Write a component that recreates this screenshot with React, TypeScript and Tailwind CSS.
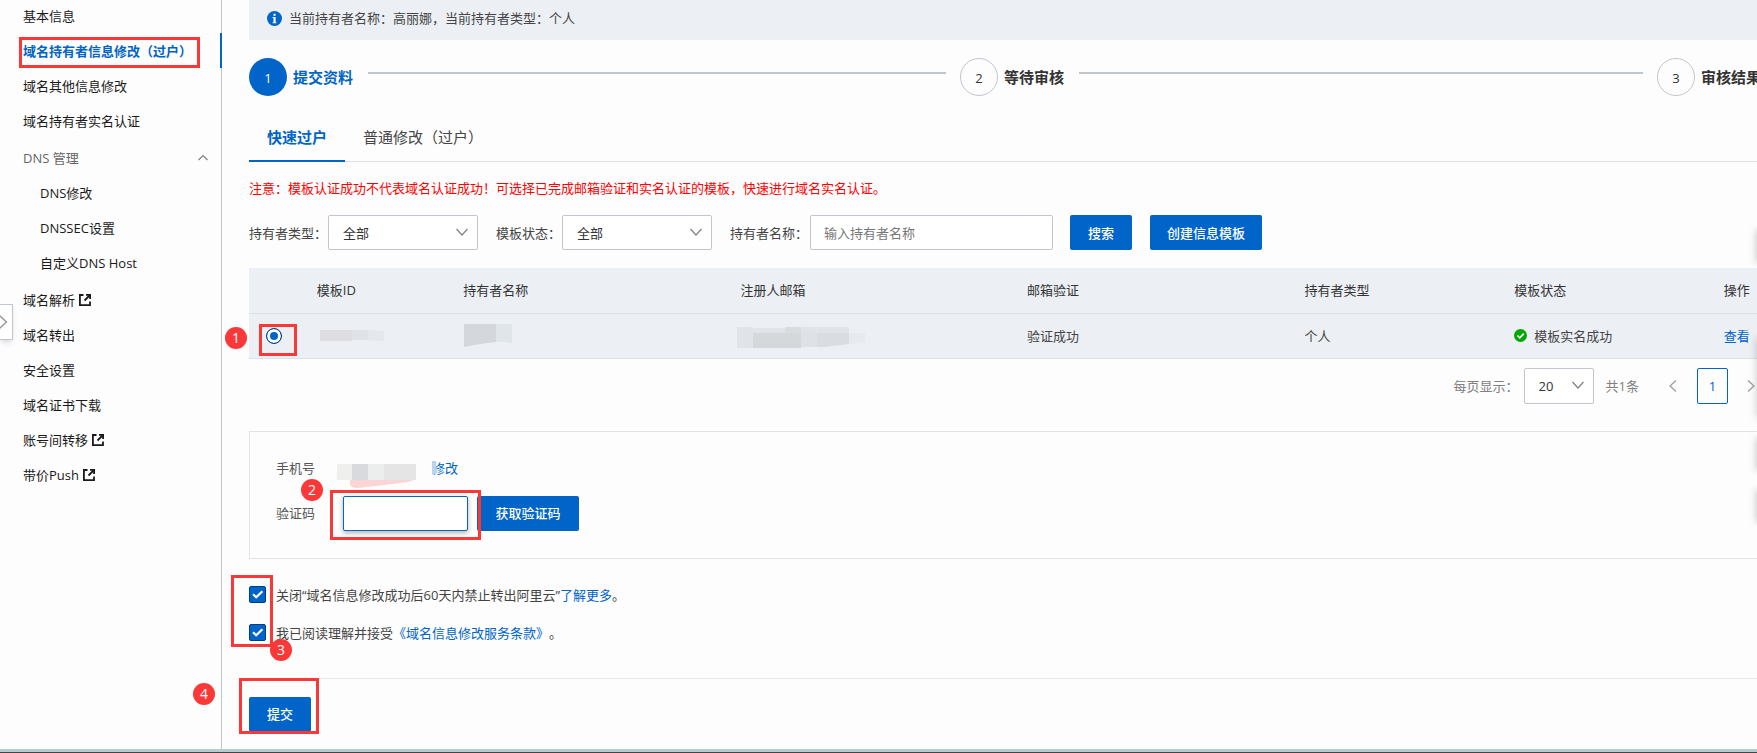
import type { ReactNode } from "react";

type NavItem = { label: string; active?: boolean; external?: boolean; nested?: boolean };

const topNav: NavItem[] = [
  { label: "基本信息" },
  { label: "域名持有者信息修改（过户）", active: true },
  { label: "域名其他信息修改" },
  { label: "域名持有者实名认证" },
];

const dnsNav: NavItem[] = [
  { label: "DNS修改", nested: true },
  { label: "DNSSEC设置", nested: true },
  { label: "自定义DNS Host", nested: true },
];

const bottomNav: NavItem[] = [
  { label: "域名解析", external: true },
  { label: "域名转出" },
  { label: "安全设置" },
  { label: "域名证书下载" },
  { label: "账号间转移", external: true },
  { label: "带价Push", external: true },
];

const DOWN = "M0.5 3 L6 9 L11.5 3";
const UP = "M1.5 8 L6 3.5 L10.5 8";
const LEFT = "M9 0.5 L3 6 L9 11.5";
const RIGHT = "M3 0.5 L9 6 L3 11.5";

function Chevron({ className, d }: { className: string; d: string }) {
  return (
    <svg className={className} viewBox="0 0 12 12" fill="none" stroke="currentColor" strokeWidth="1.2" aria-hidden="true">
      <path d={d} />
    </svg>
  );
}

function ExternalIcon() {
  return (
    <svg className="size-3 shrink-0" viewBox="0 0 12 12" fill="none" stroke="#1a1a1a" strokeWidth="1.8" aria-hidden="true">
      <path d="M4.5 1 H0.9 V11.1 H11 V7.5" />
      <path d="M7 0.9 H11.1 V5" />
      <path d="M11 1 L5.5 6.5" />
    </svg>
  );
}

function Marker({ className, children }: { className: string; children: ReactNode }) {
  return (
    <span
      className={`absolute z-20 flex size-[22px] items-center justify-center rounded-full bg-[#fb3838] text-sm leading-5 text-white ${className}`}
    >
      {children}
    </span>
  );
}

function Frame({ className }: { className: string }) {
  return <span aria-hidden="true" className={`pointer-events-none absolute z-10 border-3 border-[#fb3838] ${className}`} />;
}

function NavLink({ item }: { item: NavItem }) {
  return (
    <li className="relative">
      <a
        href="#"
        className={`flex h-[35px] items-center gap-1 whitespace-nowrap ${item.nested ? "pl-10" : "pl-[23px]"} ${
          item.active ? "font-bold text-[#0064c8]" : "text-[#1a1a1a]"
        }`}
      >
        {item.label}
        {item.external && <ExternalIcon />}
      </a>
      {item.active && (
        <>
          <span className="absolute top-0 -right-px h-full w-0.5 bg-[#0064c8]" />
          <Frame className="top-1 left-[19px] h-[31px] w-[181px]" />
        </>
      )}
    </li>
  );
}

function Sidebar() {
  return (
    <nav aria-label="域名" className="relative w-[222px] shrink-0 border-r border-[#c0c6cc]">
      <ul className="-mt-0.5">
        {topNav.map((item) => (
          <NavLink key={item.label} item={item} />
        ))}
      </ul>
      <button
        type="button"
        aria-expanded="true"
        className="mt-0.5 flex h-[35px] w-full items-center justify-between pr-3 pl-[23px] text-[#666]"
      >
        DNS 管理
        <Chevron className="size-3 text-[#808080]" d={UP} />
      </button>
      <ul className="mb-0.5">
        {dnsNav.map((item) => (
          <NavLink key={item.label} item={item} />
        ))}
      </ul>
      <ul>
        {bottomNav.map((item) => (
          <NavLink key={item.label} item={item} />
        ))}
      </ul>
      <button
        type="button"
        aria-label="展开"
        className="absolute top-[304px] left-0 flex h-9 w-[13px] items-center border border-l-0 border-[#c0c6cc] bg-white shadow-md"
      >
        <Chevron className="-ml-1 size-3.5 shrink-0 text-[#999]" d={RIGHT} />
      </button>
    </nav>
  );
}

function Step({ n, label, active }: { n: number; label: string; active?: boolean }) {
  return (
    <>
      <span
        className={`flex size-[38px] shrink-0 items-center justify-center rounded-full pt-0.5 ${
          active ? "bg-[#0064c8] text-white" : "border border-[#c0c6cc] text-[#333]"
        }`}
      >
        {n}
      </span>
      <span className={`ml-1.5 text-[15px] font-bold whitespace-nowrap ${active ? "text-[#0064c8]" : "text-[#333]"}`}>
        {label}
      </span>
    </>
  );
}

function StepLine() {
  return <span className="mr-[14px] mb-2 ml-[15px] h-0.5 flex-1 bg-[#c0c6cc]" />;
}

function Select({ id, value, className }: { id: string; value: string; className: string }) {
  return (
    <span className={`relative inline-flex shrink-0 ${className}`}>
      <select
        id={id}
        defaultValue={value}
        className="size-full appearance-none rounded-xs border border-[#c0c6cc] bg-white pl-[14px] text-[#333]"
      >
        <option>{value}</option>
      </select>
      <Chevron className="pointer-events-none absolute top-[11px] right-[10px] size-3 text-[#808080]" d={DOWN} />
    </span>
  );
}

function PrimaryButton({ children, className }: { children: ReactNode; className: string }) {
  return (
    <button
      type="button"
      className={`h-[35px] shrink-0 rounded-xs bg-[#0064c8] font-medium whitespace-nowrap text-white ${className}`}
    >
      {children}
    </button>
  );
}

function Agreement({ id, children }: { id: string; children: ReactNode }) {
  return (
    <div className="flex h-[38px] items-center gap-[10px]">
      <span className="relative flex">
        <input
          id={id}
          type="checkbox"
          defaultChecked
          className="size-[17px] appearance-none rounded-xs border border-[#003f7f] bg-[#0064c8]"
        />
        <svg
          className="pointer-events-none absolute inset-0 size-[17px]"
          viewBox="0 0 17 17"
          fill="none"
          stroke="#fff"
          strokeWidth="2.2"
          aria-hidden="true"
        >
          <path d="M4 8.2 L7.2 11.2 L13.4 5.2" />
        </svg>
      </span>
      <label htmlFor={id}>{children}</label>
    </div>
  );
}

function TemplateTable() {
  return (
    <table className="w-full table-fixed border-collapse text-left whitespace-nowrap">
      <colgroup>
        <col className="w-[4.5%]" />
        <col className="w-[9.7%]" />
        <col className="w-[18.4%]" />
        <col className="w-[19%]" />
        <col className="w-[18.4%]" />
        <col className="w-[13.9%]" />
        <col className="w-[13.9%]" />
        <col />
      </colgroup>
      <thead>
        <tr className="h-[45px] border-b border-[#dee1e4] bg-[#ecf0f5] text-[#333]">
          <th aria-label="选择" />
          <th className="font-normal">模板ID</th>
          <th className="font-normal">持有者名称</th>
          <th className="font-normal">注册人邮箱</th>
          <th className="font-normal">邮箱验证</th>
          <th className="font-normal">持有者类型</th>
          <th className="font-normal">模板状态</th>
          <th className="font-normal">操作</th>
        </tr>
      </thead>
      <tbody>
        <tr className="h-[45px] border-b border-[#dee1e4] bg-[#ecf0f5] text-[#444]">
          <td className="relative">
            <input
              type="radio"
              name="template"
              defaultChecked
              aria-label="选择模板"
              className="ml-[17px] block size-4 appearance-none rounded-full border border-[#003f7f] bg-[#0064c8] ring-[3px] ring-white ring-inset"
            />
            <Frame className="top-[10px] left-[10px] h-8 w-[38px]" />
            <Marker className="top-[13px] -left-6">1</Marker>
          </td>
          <td>
            <svg className="ml-[3px] block h-[11px] w-16" viewBox="0 0 64 11" aria-hidden="true">
              <path d="M0 0H32V11H0Z" fill="#dcdee2" />
              <path d="M32 0H48V10H32Z" fill="#dfe2e6" />
              <path d="M48 0L64 1V11H58L48 10Z" fill="#e4e8ec" />
            </svg>
          </td>
          <td>
            <svg className="ml-px block h-[23px] w-12" viewBox="0 0 48 23" aria-hidden="true">
              <path d="M0 0H32V18L16 20L5 22L0 23Z" fill="#d4d7db" />
              <path d="M32 0H48V19L40 18H32Z" fill="#e0e5e9" />
            </svg>
          </td>
          <td>
            <svg className="-ml-1 block h-[25px] w-32" viewBox="0 -4 128 25" aria-hidden="true">
              <path d="M0 0H16V21H0Z" fill="#e0e3e7" />
              <path d="M16 1H48V6H16Z" fill="#e1e5e9" />
              <path d="M16 6H64V21H16Z" fill="#d5d8db" />
              <path d="M48 0H64V6H48Z" fill="#d9dcdf" />
              <path d="M64 0H112V6H64Z" fill="#e0e3e7" />
              <path d="M64 6H80V20H64Z" fill="#dee2e6" />
              <path d="M80 6H112V17L88 20H80Z" fill="#d9dce1" />
              <path d="M112 6H128V15L112 17Z" fill="#e6eaee" />
            </svg>
          </td>
          <td>验证成功</td>
          <td>个人</td>
          <td>
            <span className="flex items-center gap-[7px]">
              <svg className="size-[13px]" viewBox="0 0 13 13" aria-hidden="true">
                <circle cx="6.5" cy="6.5" r="6.5" fill="#00a700" />
                <path d="M3.4 6.5L5.7 8.8L9.8 4.6" fill="none" stroke="#fff" strokeWidth="1.7" />
              </svg>
              模板实名成功
            </span>
          </td>
          <td>
            <a href="#" className="text-[#0064c8]">
              查看
            </a>
          </td>
        </tr>
      </tbody>
    </table>
  );
}

function Pagination() {
  return (
    <div className="mt-[9px] flex h-9 items-center justify-end text-[#808080]">
      <label htmlFor="page-size">每页显示：</label>
      <Select id="page-size" value="20" className="ml-[5px] h-9 w-[70px]" />
      <span className="ml-3">共1条</span>
      <button type="button" aria-label="上一页" className="ml-7">
        <Chevron className="size-3 text-[#999]" d={LEFT} />
      </button>
      <button
        type="button"
        aria-current="page"
        className="ml-[18px] h-9 w-[31px] rounded-xs border border-[#0064c8] text-[#0064c8]"
      >
        1
      </button>
      <button type="button" aria-label="下一页" className="ml-[17px]">
        <Chevron className="size-3 text-[#999]" d={RIGHT} />
      </button>
    </div>
  );
}

function VerifyPanel() {
  return (
    <section className="mt-[27px] flex h-[128px] flex-col border border-r-0 border-[#e0e2e4] pt-5 pl-[26px] text-[#555]">
      <div className="flex h-[35px] items-center pb-0.5">
        <span className="w-[60px]">手机号</span>
        <svg className="mt-4 h-6 w-20" viewBox="0 0 80 24" aria-hidden="true">
          <path d="M1 0H16V16H1Q0 12 1 8Z" fill="#efefee" />
          <path d="M16 0H32V16H16Z" fill="#d9dadd" />
          <path d="M32 0H48V16H32Z" fill="#eceeee" />
          <path d="M48 0H80V16H48Z" fill="#e5e5e6" />
          <path d="M14 16H78L72 18L48 21L22 24Q13 24 14 19Z" fill="#fbd5d6" />
        </svg>
        <a href="#" className="relative ml-4 text-[#0064c8]">
          修改
          <svg className="absolute top-[3px] left-0 h-[14px] w-1.5" viewBox="0 0 6 14" aria-hidden="true">
            <path d="M0 0H4V5L5 8V12L0 14Z" fill="#bcd3ee" />
          </svg>
        </a>
      </div>
      <div className="relative mt-[9px] flex h-[35px] items-center">
        <label htmlFor="code" className="w-[67px]">
          验证码
        </label>
        <input
          id="code"
          type="text"
          className="h-[35px] w-[125px] rounded-xs border border-[#0064c8] bg-white px-3 shadow-[0_2px_5px_rgba(0,0,0,0.3)] outline-none"
        />
        <PrimaryButton className="ml-[9px] w-[102px]">获取验证码</PrimaryButton>
        <Frame className="-top-[6px] left-[54px] h-[50px] w-[151px]" />
        <Marker className="-top-[17px] left-[25px]">2</Marker>
      </div>
    </section>
  );
}

export default function App() {
  return (
    <div className="relative flex min-h-screen flex-col overflow-hidden bg-[#fdfdfd] font-['Open_Sans','Noto_Sans_CJK_SC',sans-serif] text-[13px] leading-5 text-[#444] [text-spacing-trim:space-all]">
      <div className="flex flex-1">
        <Sidebar />
        <main className="min-w-0 flex-1 pl-[27px]">
          <div className="flex h-10 items-center gap-[7px] bg-[#ecf0f5] pb-1 pl-[18px]">
            <svg className="size-[15px]" viewBox="0 0 15 15" aria-hidden="true">
              <circle cx="7.5" cy="7.5" r="7.5" fill="#0064c8" />
              <path d="M6.5 2.8H8.6V4.8H6.5ZM5.6 6H8.6V11.2H9.4V12.2H5.6V11.2H6.5V7H5.6Z" fill="#fff" />
            </svg>
            当前持有者名称：高丽娜，当前持有者类型：个人
          </div>

          <ol className="mt-[18px] flex">
            <li className="flex flex-51 items-center">
              <Step n={1} label="提交资料" active />
              <StepLine />
            </li>
            <li className="flex flex-50 items-center">
              <Step n={2} label="等待审核" />
              <StepLine />
            </li>
            <li className="flex w-[100px] shrink-0 items-center">
              <Step n={3} label="审核结果" />
            </li>
          </ol>

          <div role="tablist" className="mt-[17px] flex border-b border-[#dee1e4] text-[15px]">
            <button
              type="button"
              role="tab"
              aria-selected="true"
              className="-mb-px h-[49px] border-b-2 border-[#0064c8] px-[18px] font-bold text-[#0064c8]"
            >
              快速过户
            </button>
            <button type="button" role="tab" aria-selected="false" className="h-12 px-[18px] text-[#444]">
              普通修改（过户）
            </button>
          </div>

          <p className="mt-4 text-[#f00]">
            注意：模板认证成功不代表域名认证成功！可选择已完成邮箱验证和实名认证的模板，快速进行域名实名认证。
          </p>

          <form className="mt-[17px] flex items-center">
            <label htmlFor="holder-type" className="w-[79px] shrink-0">
              持有者类型：
            </label>
            <Select id="holder-type" value="全部" className="h-[35px] w-[150px]" />
            <label htmlFor="status" className="ml-[18px] w-[66px] shrink-0">
              模板状态：
            </label>
            <Select id="status" value="全部" className="h-[35px] w-[150px]" />
            <label htmlFor="holder-name" className="ml-[18px] w-20 shrink-0">
              持有者名称：
            </label>
            <input
              id="holder-name"
              type="text"
              placeholder="输入持有者名称"
              className="h-[35px] w-[243px] rounded-xs border border-[#c0c6cc] bg-white px-[13px] placeholder:text-[#777]"
            />
            <PrimaryButton className="ml-[17px] w-[62px]">搜索</PrimaryButton>
            <PrimaryButton className="ml-[18px] w-[112px]">创建信息模板</PrimaryButton>
          </form>

          <div className="mt-[18px]">
            <TemplateTable />
          </div>
          <Pagination />
          <VerifyPanel />

          <div className="relative mt-[17px]">
            <Agreement id="agree-transfer">
              关闭“域名信息修改成功后60天内禁止转出阿里云”
              <a href="#" className="text-[#0064c8]">
                了解更多
              </a>
              。
            </Agreement>
            <Agreement id="agree-terms">
              我已阅读理解并接受
              <a href="#" className="text-[#0064c8]">
                《域名信息修改服务条款》
              </a>
              。
            </Agreement>
            <Frame className="-top-px -left-[18px] h-[72px] w-[42px]" />
            <Marker className="top-[63px] left-[21px]">3</Marker>
          </div>

          <div className="relative mt-[26px] border-t border-[#e6e8ea] pt-[18px] pb-4">
            <PrimaryButton className="w-[62px]">提交</PrimaryButton>
            <Frame className="-top-px -left-[10px] h-14 w-20" />
            <Marker className="top-1 -left-14">4</Marker>
          </div>
        </main>
      </div>
      <div className="h-1 border-b border-[#444] bg-[#b4cccf]" />
      <div aria-hidden="true" className="absolute top-[230px] left-full flex flex-col gap-5">
        <span className="h-8 w-10 shadow-[0_0_8px_rgba(0,0,0,0.25)]" />
        <span className="my-14 h-20 w-10 shadow-[0_0_8px_rgba(0,0,0,0.2)]" />
        <span className="-mt-14 h-8 w-10 shadow-[0_0_8px_rgba(0,0,0,0.25)]" />
        <span className="h-8 w-10 shadow-[0_0_8px_rgba(0,0,0,0.25)]" />
      </div>
    </div>
  );
}
